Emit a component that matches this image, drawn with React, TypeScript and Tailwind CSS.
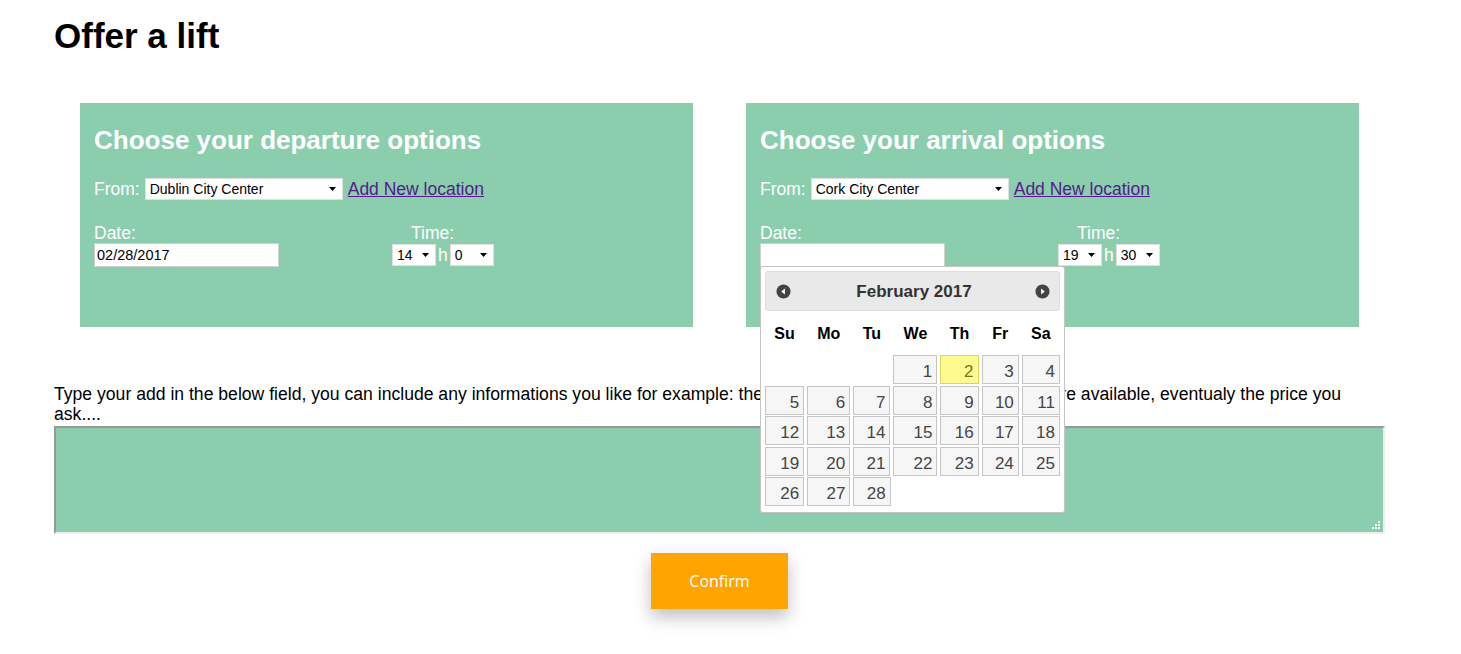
import React from 'react';

const FakeSelect: React.FC<{ value: string; width: string }> = ({ value, width }) => (
  <div
    className={`flex items-center justify-between bg-white border border-[#e0e0e0] h-[22px] pl-1 pr-[6px] text-[14px] text-black font-['Liberation_Sans',Arial,sans-serif] ${width}`}
  >
    <span className="leading-none">{value}</span>
    <svg width="7" height="4" viewBox="0 0 7 4">
      <path d="M0 0h7L3.5 4z" fill="#000" />
    </svg>
  </div>
);

const NavIcon: React.FC<{ dir: 'prev' | 'next' }> = ({ dir }) => (
  <svg width="15" height="15" viewBox="0 0 16 16">
    <circle cx="8" cy="8" r="7.5" fill="#444" />
    {dir === 'prev' ? <path d="M9.5 4.8v6.4L5.6 8z" fill="#fff" /> : <path d="M6.5 4.8v6.4L10.4 8z" fill="#fff" />}
  </svg>
);

const days = ['Su', 'Mo', 'Tu', 'We', 'Th', 'Fr', 'Sa'];
const colW = ['w-[40px]', 'w-[44px]', 'w-[38px]', 'w-[45px]', 'w-[39px]', 'w-[38px]', 'w-[39px]'];
const weeks: (number | null)[][] = [
  [null, null, null, 1, 2, 3, 4],
  [5, 6, 7, 8, 9, 10, 11],
  [12, 13, 14, 15, 16, 17, 18],
  [19, 20, 21, 22, 23, 24, 25],
  [26, 27, 28, null, null, null, null],
];

const Calendar: React.FC = () => (
  <div className="absolute left-0 top-[23px] w-[305px] bg-white border border-[#c5c5c5] rounded-[3px] p-[4px] pb-[6px] z-10 font-['Liberation_Sans',Arial,sans-serif]">
    <div className="flex items-center justify-between h-[40px] bg-[#e9e9e9] border border-[#dddddd] rounded-[3px] pl-[10px] pr-[9px]">
      <NavIcon dir="prev" />
      <span className="text-[17px] font-bold text-[#333] ml-[2px]">February 2017</span>
      <NavIcon dir="next" />
    </div>
    <div className="flex mt-[11px] mb-[9px]">
      {days.map((d, i) => (
        <div key={d} className={`${colW[i]} mr-[3px] last:mr-0 text-center text-[16px] font-bold text-black`}>
          {d}
        </div>
      ))}
    </div>
    <div className="flex flex-col gap-[1.5px]">
      {weeks.map((w, r) => (
        <div key={r} className="flex h-[29px]">
          {w.map((n, i) =>
            n === null ? (
              <div key={i} className={`${colW[i]} mr-[3px] last:mr-0`} />
            ) : (
              <div
                key={i}
                className={`${colW[i]} mr-[3px] last:mr-0 border text-right pr-[4px] pt-[3px] text-[17px] ${
                  n === 2 ? 'bg-[#fffa90] border-[#dad55e] text-[#777620]' : 'bg-[#f6f6f6] border-[#c5c5c5] text-[#454545]'
                }`}
              >
                {n}
              </div>
            ),
          )}
        </div>
      ))}
    </div>
  </div>
);

const Panel: React.FC<{
  title: string;
  place: string;
  date: string;
  hour: string;
  min: string;
  showCal?: boolean;
}> = ({ title, place, date, hour, min, showCal }) => (
  <div className="w-[613px] h-[224px] bg-[#8bceae] pl-[14px] pt-[22px] text-white">
    <h2 className="text-[26px] font-bold leading-[30px]">{title}</h2>
    <div className="flex items-center mt-[21px] text-[17.5px]">
      <span className="mr-[5px]">From:</span>
      <FakeSelect value={place} width="w-[198px]" />
      <a href="#" className="ml-[5px] text-[#551a8b] underline">
        Add New location
      </a>
    </div>
    <div className="flex mt-[21px]">
      <div className="w-[298px]">
        <div className="text-[17.5px] leading-[20px]">Date:</div>
        <div className="relative">
          <div className="w-[185px] h-[24px] bg-white border border-[#d0d0d0] pl-[2px] text-[14.5px] leading-[22px] text-black">
            {date}
          </div>
          {showCal && <Calendar />}
        </div>
      </div>
      <div className="flex flex-col">
        <div className="text-[17.5px] leading-[20px] pl-[19px]">Time:</div>
        <div className="flex items-center -mt-[1px]">
          <FakeSelect value={hour} width="w-[44px]" />
          <span className="mx-[2px] text-[17.5px]">h</span>
          <FakeSelect value={min} width="w-[44px]" />
        </div>
      </div>
    </div>
  </div>
);

export default function App() {
  return (
    <div className="min-h-screen bg-white pl-[54px] pt-[16px] font-['Liberation_Sans',Arial,sans-serif] text-black">
      <h1 className="text-[35px] font-bold leading-[40px]">Offer a lift</h1>
      <div className="flex gap-[53px] ml-[26px] mt-[47px]">
        <Panel title="Choose your departure options" place="Dublin City Center" date="02/28/2017" hour="14" min="0" />
        <Panel title="Choose your arrival options" place="Cork City Center" date="" hour="19" min="30" showCal />
      </div>
      <p className="w-[1330px] mt-[57px] text-[17.6px] leading-[20px]">
        Type your add in the below field, you can include any informations you like for example: the car model, the
        number of free seats are available, eventualy the price you ask....
      </p>
      <div className="relative w-[1331px] h-[108px] mt-[2px] bg-[#8bceae] border-t-2 border-l-2 border-t-[#999] border-l-[#999] border-r-2 border-b-2 border-r-[#eee] border-b-[#eee]">
        <svg className="absolute right-[3px] bottom-[3px]" width="8" height="8" viewBox="0 0 8 8">
          <rect x="6" y="0" width="2" height="2" fill="#fff" />
          <rect x="3" y="3" width="2" height="2" fill="#fff" />
          <rect x="6" y="3" width="2" height="2" fill="#fff" />
          <rect x="0" y="6" width="2" height="2" fill="#fff" />
          <rect x="3" y="6" width="2" height="2" fill="#fff" />
          <rect x="6" y="6" width="2" height="2" fill="#fff" />
        </svg>
      </div>
      <div className="flex w-[1331px] justify-center mt-[19px] pr-[1px]">
        <button className="w-[137px] h-[56px] bg-[#ffa500] text-white text-[16px] font-['Open_Sans',sans-serif] shadow-[0_8px_16px_rgba(0,0,0,0.25)] ml-[1px]">
          Confirm
        </button>
      </div>
    </div>
  );
}
